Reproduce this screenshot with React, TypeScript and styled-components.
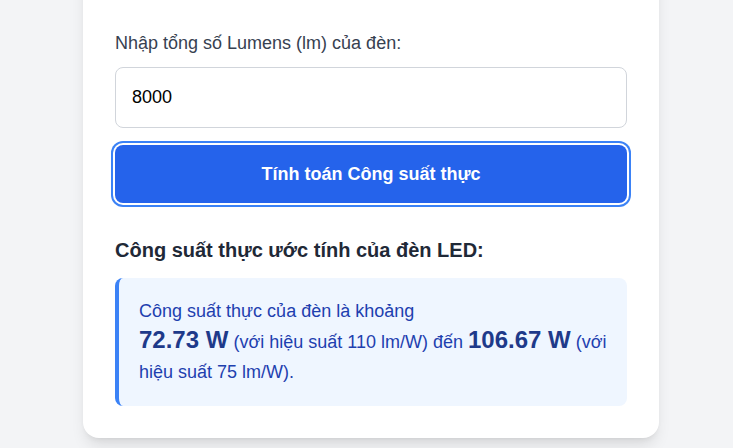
import React, { useState } from 'react';
import styled, { createGlobalStyle } from 'styled-components';

const GlobalStyle = createGlobalStyle`
  html, body {
    margin: 0;
    padding: 0;
    background: #f3f4f6;
    font-family: 'Liberation Sans', Arial, sans-serif;
    overflow: hidden;
  }
`;

const Page = styled.div`
  display: flex;
  justify-content: center;
  padding-left: 9px;
  min-height: 448px;
`;

const Card = styled.div`
  width: 576px;
  box-sizing: border-box;
  margin-top: -40px;
  align-self: flex-start;
  background: #fff;
  border-radius: 16px;
  padding: 70px 32px 32px;
  box-shadow: 0 10px 15px -3px rgba(0, 0, 0, 0.1), 0 4px 6px -4px rgba(0, 0, 0, 0.1);
  display: flex;
  flex-direction: column;
`;

const Label = styled.label`
  font-size: 18px;
  line-height: 27px;
  color: #374151;
  margin-bottom: 10px;
`;

const Input = styled.input`
  height: 61px;
  box-sizing: border-box;
  border: 1px solid #d1d5db;
  border-radius: 8px;
  padding: 0 16px;
  font-size: 18px;
  font-family: inherit;
  color: #000;
  outline: none;
`;

const Button = styled.button`
  margin-top: 17px;
  height: 58px;
  border: none;
  border-radius: 8px;
  background: #2563eb;
  color: #fff;
  font-family: inherit;
  font-size: 18px;
  font-weight: 700;
  padding-top: 2px;
  cursor: pointer;
  box-shadow: 0 0 0 2px #fff, 0 0 0 4px #3b82f6;
`;

const Heading = styled.h3`
  margin: 33px 0 14px;
  font-size: 20px;
  line-height: 28px;
  font-weight: 700;
  color: #1f2937;
`;

const Result = styled.div`
  background: #eff6ff;
  border-left: 4px solid #3b82f6;
  border-radius: 8px;
  padding: 18px 20px;
  font-size: 18px;
  line-height: 30.5px;
  color: #1e40af;
`;

const Watt = styled.strong`
  font-size: 24px;
  line-height: 1;
  font-weight: 700;
  color: #1e3a8a;
`;

export default function App() {
  const [lumens, setLumens] = useState('8000');
  const n = Number(lumens) || 0;
  const min = (n / 110).toFixed(2);
  const max = (n / 75).toFixed(2);

  return (
    <>
      <GlobalStyle />
      <Page>
        <Card>
          <Label htmlFor="lm">Nhập tổng số Lumens (lm) của đèn:</Label>
          <Input id="lm" value={lumens} onChange={(e) => setLumens(e.target.value)} />
          <Button>Tính toán Công suất thực</Button>
          <Heading>Công suất thực ước tính của đèn LED:</Heading>
          <Result>
            Công suất thực của đèn là khoảng
            <br />
            <Watt>{min} W</Watt> (với hiệu suất 110 lm/W) đến <Watt>{max} W</Watt> (với hiệu suất 75 lm/W).
          </Result>
        </Card>
      </Page>
    </>
  );
}
